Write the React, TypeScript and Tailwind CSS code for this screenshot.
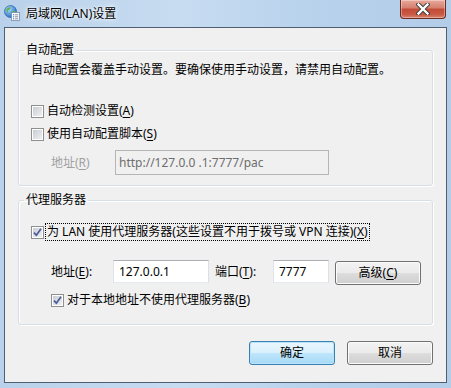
import React from "react";

const FONT = { fontFamily: '"Noto Sans", "Noto Sans CJK SC", sans-serif' };

function CheckBox({ checked }: { checked?: boolean }) {
  return (
    <span className="flex h-[13px] w-[13px] shrink-0 border border-[#8e8f8f] bg-white p-[1px]">
      <span className="relative flex flex-1 items-center justify-center bg-[linear-gradient(135deg,#c9cdd2,#eef0f2)]">
        {checked && (
          <svg width="9" height="9" viewBox="0 0 9 9" className="overflow-visible">
            <path d="M1 4.6 L3.4 7.2 L8 0.8" stroke="#4a5c9c" strokeWidth="1.7" fill="none" />
          </svg>
        )}
      </span>
    </span>
  );
}

function U({ c }: { c: string }) {
  return <u className="underline underline-offset-[2px]">{c}</u>;
}

function WinButton({ children, primary }: { children: React.ReactNode; primary?: boolean }) {
  return (
    <div
      className={
        "flex h-[24px] w-[86px] items-center justify-center rounded-[3px] border text-[12px] text-black " +
        (primary
          ? "border-[#3c7fb1] bg-[linear-gradient(#eaf6fd_0%,#d9f0fc_50%,#bee6fd_51%,#a7d9f5_100%)] shadow-[inset_0_0_0_1px_#b8e4fb]"
          : "border-[#707070] bg-[linear-gradient(#f2f2f2_0%,#ebebeb_50%,#dddddd_51%,#cfcfcf_100%)] shadow-[inset_0_0_0_1px_#fcfcfc]")
      }
    >
      {children}
    </div>
  );
}

export default function App() {
  return (
    <div
      className="flex h-[388px] w-[451px] flex-col overflow-hidden bg-[linear-gradient(90deg,#b9d1ea_0%,#c7dcf1_40%,#b8d2ec_70%,#b3cde9_100%)] text-[12px] leading-[16px] text-black"
      style={FONT}
    >
      {/* title bar */}
      <div className="flex h-[27px] shrink-0 items-start">
        <svg width="16" height="16" viewBox="0 0 16 16" className="ml-[4px] mt-[5px] shrink-0">
          <defs>
            <radialGradient id="g" cx="0.35" cy="0.3" r="0.8">
              <stop offset="0" stopColor="#a9dcff" />
              <stop offset="1" stopColor="#1d64c4" />
            </radialGradient>
          </defs>
          <circle cx="6.5" cy="6.5" r="6" fill="url(#g)" stroke="#1a4f9a" strokeWidth="0.6" />
          <path d="M2.5 4 Q4.5 1.5 7 2.5 Q6 4.5 4 5.5 Q3 7 4.5 9 Q2.5 8 2.5 4 Z" fill="#5fb33c" />
          <path d="M8.5 6 Q10.5 5 11.5 7 Q10.5 9 9 8.5 Z" fill="#5fb33c" />
          <rect x="7.5" y="7.5" width="8" height="8" fill="#fdfdfd" stroke="#7a8ba3" strokeWidth="0.8" />
          <rect x="9" y="9.3" width="1.2" height="1" fill="#2b6fc9" />
          <rect x="11" y="9.3" width="3.2" height="1" fill="#7f8ea3" />
          <rect x="9" y="11.3" width="1.2" height="1" fill="#2b6fc9" />
          <rect x="11" y="11.3" width="3.2" height="1" fill="#7f8ea3" />
          <rect x="9" y="13.3" width="1.2" height="1" fill="#2b6fc9" />
          <rect x="11" y="13.3" width="3.2" height="1" fill="#7f8ea3" />
        </svg>
        <span className="ml-[6px] mt-[6px] [text-shadow:0_0_6px_#ffffff,0_0_3px_#ffffff]">局域网(LAN)设置</span>
        <div className="ml-auto mr-[5px] flex h-[19px] w-[46px] items-center justify-center rounded-b-[4px] border border-t-0 border-[#6b2a22] bg-[linear-gradient(#e9a99c_0%,#d47f6e_45%,#c24a36_50%,#c95a44_80%,#d8826b_100%)] shadow-[inset_0_0_0_1px_rgba(255,255,255,0.35)]">
          <svg width="14" height="12" viewBox="0 0 14 12">
            <path d="M2.5 1.5 L11.5 10.5 M11.5 1.5 L2.5 10.5" stroke="#3b3b3b" strokeWidth="4.2" strokeLinecap="square" />
            <path d="M2.5 1.5 L11.5 10.5 M11.5 1.5 L2.5 10.5" stroke="#ffffff" strokeWidth="2.4" strokeLinecap="square" />
          </svg>
        </div>
      </div>

      {/* client area */}
      <div className="mx-[4px] flex h-[356px] shrink-0 flex-col border border-[#4f5e71] bg-[#f0f0f0] px-[13px] pt-[14px]">
        {/* group 1 */}
        <fieldset className="rounded-[3px] border border-[#d5dfe5] px-[5px] pb-[10px] shadow-[inset_1px_1px_0_#ffffff,1px_1px_0_#ffffff]">
          <legend className="px-[2px] leading-[16px]">自动配置</legend>
          <div className="flex flex-col pl-[7px]">
            <div className="mt-[4px] h-[16px]">自动配置会覆盖手动设置。要确保使用手动设置，请禁用自动配置。</div>
            <div className="mt-[25px] flex h-[16px] items-center">
              <CheckBox />
              <span className="ml-[3px]">
                自动检测设置(<U c="A" />)
              </span>
            </div>
            <div className="mt-[7px] flex h-[16px] items-center">
              <CheckBox />
              <span className="ml-[3px]">
                使用自动配置脚本(<U c="S" />)
              </span>
            </div>
            <div className="mt-[8px] flex h-[25px] items-center pl-[20px]">
              <span className="w-[64px] text-[#a0a0a0]">
                地址(<U c="R" />)
              </span>
              <div className="flex h-[25px] w-[214px] items-center border border-[#b5b5b5] bg-[#f0f0f0] pl-[3px] text-[#6d6d6d]">
                http://127.0.0 .1:7777/pac
              </div>
            </div>
          </div>
        </fieldset>

        {/* group 2 */}
        <fieldset className="mt-[6px] rounded-[3px] border border-[#d5dfe5] px-[5px] pb-[16px] shadow-[inset_1px_1px_0_#ffffff,1px_1px_0_#ffffff]">
          <legend className="px-[2px] leading-[16px]">代理服务器</legend>
          <div className="flex flex-col pl-[7px]">
            <div className="mt-[15px] flex h-[18px] items-center">
              <CheckBox checked />
              <span className="ml-[1px] flex h-[18px] items-center border border-dotted border-black pl-[1px] pr-[1px]">
                为 LAN 使用代理服务器(这些设置不用于拨号或 VPN 连接)(<U c="X" />)
              </span>
            </div>
            <div className="mt-[19px] flex h-[25px] items-start pl-[20px]">
              <span className="flex h-[23px] w-[62px] items-center">
                地址(<U c="E" />):
              </span>
              <div className="flex h-[23px] w-[96px] items-center border border-[#abadb3] border-b-[#e3e9ef] border-l-[#e2e3ea] border-r-[#dbdfe6] bg-white pl-[5px]">
                127.0.0.1
              </div>
              <span className="ml-[6px] flex h-[23px] w-[58px] items-center">
                端口(<U c="T" />):
              </span>
              <div className="flex h-[23px] w-[56px] items-center border border-[#abadb3] border-b-[#e3e9ef] border-l-[#e2e3ea] border-r-[#dbdfe6] bg-white pl-[5px]">
                7777
              </div>
              <div className="ml-[6px] mt-[1px]">
                <WinButton>
                  高级(<U c="C" />)
                </WinButton>
              </div>
            </div>
            <div className="mt-[7px] flex h-[16px] items-center pl-[20px]">
              <CheckBox checked />
              <span className="ml-[3px]">
                对于本地地址不使用代理服务器(<U c="B" />)
              </span>
            </div>
          </div>
        </fieldset>

        {/* buttons */}
        <div className="mt-[16px] flex justify-end gap-[12px]">
          <WinButton primary>确定</WinButton>
          <WinButton>取消</WinButton>
        </div>
      </div>
    </div>
  );
}
